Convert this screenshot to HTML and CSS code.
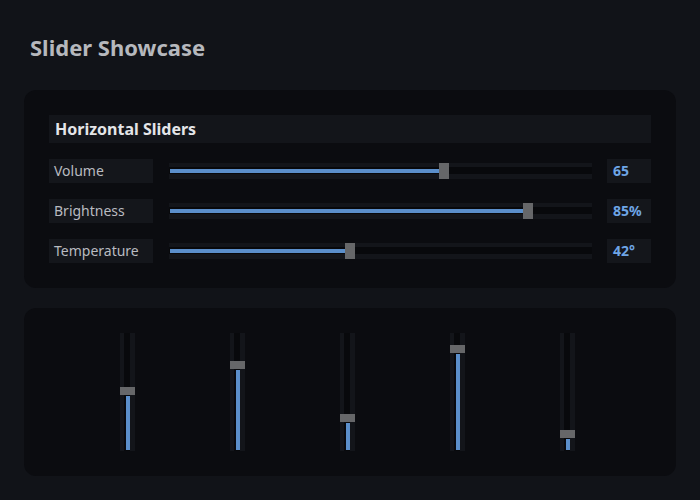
FILE: index.html
```html
<!DOCTYPE html>
<html lang="en">
<head>
  <meta charset="UTF-8" />
  <meta name="viewport" content="width=device-width, initial-scale=1.0" />
  <title>Slider Showcase</title>
  <link rel="stylesheet" href="styles.css">
</head>
<body>
  <h1>Slider Showcase</h1>

  <div class="card">
    <div class="card-title">Horizontal Sliders</div>

    <div class="row">
      <div class="label">Volume</div>
      <div class="htrack"><div class="hfill" style="width: 269px"></div><div class="hthumb"></div></div>
      <div class="value">65</div>
    </div>
    <div class="row">
      <div class="label">Brightness</div>
      <div class="htrack"><div class="hfill" style="width: 353px"></div><div class="hthumb"></div></div>
      <div class="value">85%</div>
    </div>
    <div class="row">
      <div class="label">Temperature</div>
      <div class="htrack"><div class="hfill" style="width: 175px"></div><div class="hthumb"></div></div>
      <div class="value">42°</div>
    </div>
  </div>

  <div class="card vcard">
    <div class="vtrack"><div class="vthumb"></div><div class="vfill" style="height: 54px"></div></div>
    <div class="vtrack"><div class="vthumb"></div><div class="vfill" style="height: 80px"></div></div>
    <div class="vtrack"><div class="vthumb"></div><div class="vfill" style="height: 27px"></div></div>
    <div class="vtrack"><div class="vthumb"></div><div class="vfill" style="height: 96px"></div></div>
    <div class="vtrack"><div class="vthumb"></div><div class="vfill" style="height: 11px"></div></div>
  </div>
</body>
</html>
```

FILE: styles.css
```css
body { margin: 0; padding: 32px 24px 24px; background: #111318; font-family: "Noto Sans", "Open Sans", sans-serif; color: #babcc1; }
h1 { margin: 0 0 28px 6px; font-size: 22px; line-height: 30px; font-weight: 700; color: #b6b8bd; }

.card { background: #0b0c10; border-radius: 12px; padding: 25px; margin-bottom: 20px; }
.card-title { background: #13151a; height: 28px; line-height: 28px; padding: 0 6px; font-size: 16px; font-weight: 700; color: #e4e5e8; margin-bottom: 16px; }

.row { display: flex; align-items: center; height: 24px; margin-bottom: 16px; }
.row:last-child { margin-bottom: 0; }
.label { width: 99px; height: 24px; line-height: 24px; padding-left: 5px; background: #14161b; font-size: 14px; color: #b9bbc0; }
.value { width: 38px; height: 24px; line-height: 24px; padding-left: 6px; background: #14161b; font-size: 14px; font-weight: 700; color: #6ea5e6; margin-left: 15px; }

.htrack { flex: 1; margin-left: 16px; height: 16px; padding: 0 1px; display: flex; align-items: center;
  background: linear-gradient(#13151a 0 4px, #08090c 4px 11px, #13151a 11px); }
.hfill { height: 4px; background: #5b8fcb; }
.hthumb { width: 10px; height: 16px; background: #666769; }

.vcard { display: flex; justify-content: center; gap: 95px; padding-right: 30px; }
.vtrack { width: 15px; height: 118px; display: flex; flex-direction: column; justify-content: flex-end; align-items: center; padding-bottom: 1px; box-sizing: border-box;
  background: linear-gradient(90deg, #13151a 0 4px, #08090c 4px 10px, #13151a 10px); }
.vthumb { width: 15px; height: 8px; background: #666769; margin-bottom: 1px; }
.vfill { width: 4px; background: #5b8fcb; }
```
